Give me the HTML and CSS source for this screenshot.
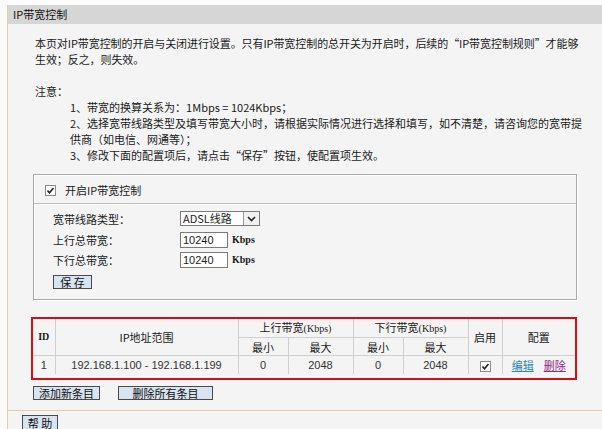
FILE: index.html
```html
<!DOCTYPE html>
<html lang="zh-CN">
<head>
<meta charset="utf-8">
<title>IP带宽控制</title>
<link rel="stylesheet" href="styles.css">
</head>
<body>
<div class="frame">
  <div class="titlebar">IP带宽控制</div>
  <div class="content">
    <p class="intro">本页对IP带宽控制的开启与关闭进行设置。只有IP带宽控制的总开关为开启时，后续的“IP带宽控制规则”才能够<br>生效；反之，则失效。</p>
    <p class="note-h">注意：</p>
    <div class="notes">
      <p>1、带宽的换算关系为：1Mbps = 1024Kbps；</p>
      <p>2、选择宽带线路类型及填写带宽大小时，请根据实际情况进行选择和填写，如不清楚，请咨询您的宽带提<br>供商（如电信、网通等）；</p>
      <p>3、修改下面的配置项后，请点击“保存”按钮，使配置项生效。</p>
    </div>
    <div class="box">
      <div class="box-head">
        <span class="chk"><svg width="9" height="9" viewBox="0 0 9 9"><path d="M1.5 4.5 L3.5 6.8 L7.5 2" fill="none" stroke="#222" stroke-width="1.6"/></svg></span>
        <span>开启IP带宽控制</span>
      </div>
      <div class="box-body">
        <div class="row r1">
          <span class="lbl">宽带线路类型：</span>
          <div class="select"><span class="sel-val">ADSL线路</span><span class="sel-arrow"><svg width="9" height="6" viewBox="0 0 9 6"><path d="M1 1 L4.5 4.5 L8 1" fill="none" stroke="#222" stroke-width="1.6"/></svg></span></div>
        </div>
        <div class="row r2">
          <span class="lbl">上行总带宽：</span>
          <span class="input">10240</span>
          <span class="unit">Kbps</span>
        </div>
        <div class="row r3">
          <span class="lbl">下行总带宽：</span>
          <span class="input">10240</span>
          <span class="unit">Kbps</span>
        </div>
        <button class="btn save">保 存</button>
      </div>
    </div>
    <div class="tblwrap">
      <table class="rules">
        <colgroup>
          <col class="c-id"><col class="c-ip"><col class="c-min"><col class="c-max"><col class="c-min"><col class="c-max"><col class="c-en"><col class="c-cfg">
        </colgroup>
        <tr class="h1">
          <th rowspan="2" class="idh">ID</th>
          <th rowspan="2">IP地址范围</th>
          <th colspan="2">上行带宽<span class="kb">(Kbps)</span></th>
          <th colspan="2">下行带宽<span class="kb">(Kbps)</span></th>
          <th rowspan="2">启用</th>
          <th rowspan="2">配置</th>
        </tr>
        <tr class="h2">
          <th>最小</th><th>最大</th><th>最小</th><th>最大</th>
        </tr>
        <tr class="data">
          <td>1</td>
          <td>192.168.1.100 - 192.168.1.199</td>
          <td>0</td>
          <td>2048</td>
          <td>0</td>
          <td>2048</td>
          <td><span class="chk small"><svg width="9" height="9" viewBox="0 0 9 9"><path d="M1.5 4.5 L3.5 6.8 L7.5 2" fill="none" stroke="#222" stroke-width="1.6"/></svg></span></td>
          <td class="cfg"><a class="edit" href="#">编辑</a><a class="del" href="#">删除</a></td>
        </tr>
      </table>
    </div>
    <div class="actions">
      <button class="btn add">添加新条目</button>
      <button class="btn delall">删除所有条目</button>
    </div>
  </div>
  <div class="footer">
    <button class="btn help">帮 助</button>
  </div>
</div>
</body>
</html>
```

FILE: styles.css
```css
html, body {
  margin: 0;
  padding: 0;
  background: #fbfbfb;
}
body {
  font-family: "Noto Sans CJK SC", "Noto Sans", sans-serif;
  font-size: 11px;
  color: #1a1a1a;
  line-height: 16px;
  width: 602px;
  height: 429px;
  overflow: hidden;
}
.frame {
  margin-top: 5px;
  margin-left: 7px;
  border-left: 1px solid #e2cfae;
  background: #f4f4f4;
}
.titlebar {
  height: 19px;
  line-height: 19px;
  background: #d6d6d6;
  padding-left: 5px;
  font-size: 11px;
  color: #111;
}
.content {
  padding: 11px 25px 10px 25px;
  border-bottom: 1px solid #e2cfae;
}
.content p {
  margin: 0;
  white-space: nowrap;
}
.intro {
  padding-left: 2px;
  letter-spacing: -0.08px;
}
.note-h {
  margin-top: 16px !important;
  padding-left: 2px;
}
.notes {
  padding-left: 37px;
}
.box {
  margin-top: 11px;
  border: 1px solid #a9a9a9;
  box-shadow: 1px 1px 0 #fff, inset 1px 1px 0 #fff;
}
.box-head {
  height: 29px;
  display: flex;
  align-items: center;
  padding: 2px 0 0 11px;
  box-sizing: border-box;
  border-bottom: 1px solid #bdbdbd;
  box-shadow: 0 1px 0 #fff;
}
.chk {
  width: 11px;
  height: 11px;
  box-sizing: border-box;
  border: 1px solid #8a8a8a;
  background: #fff;
  display: inline-flex;
  align-items: center;
  justify-content: center;
  margin-right: 9px;
}
.chk.small {
  margin: 0;
  vertical-align: middle;
}
.box-body {
  padding: 7px 0 10px 19px;
}
.row {
  display: flex;
  align-items: center;
}
.lbl {
  width: 127px;
}
.r1 {
  height: 15px;
  margin-bottom: 6px;
}
.r2, .r3 {
  height: 16px;
}
.r2 {
  margin-bottom: 4px;
}
.select {
  width: 80px;
  height: 15px;
  box-sizing: border-box;
  border: 1px solid #7a7a7a;
  background: #fff;
  display: flex;
  align-items: center;
  font-size: 11px;
}
.sel-val {
  flex: 1;
  padding-left: 2px;
  line-height: 13px;
}
.sel-arrow {
  width: 16px;
  height: 13px;
  box-sizing: border-box;
  border-left: 1px solid #9a9a9a;
  background: #f0f0f0;
  display: flex;
  align-items: center;
  justify-content: center;
}
.input {
  width: 48px;
  height: 16px;
  box-sizing: border-box;
  border: 1px solid #7a7a7a;
  background: #fff;
  padding-left: 2px;
  line-height: 14px;
  font-family: "Liberation Sans", sans-serif;
  font-size: 11px;
}
.unit {
  margin-left: 4px;
  font-family: "Liberation Serif", serif;
  font-weight: bold;
  font-size: 10px;
}
.btn {
  font-family: "Noto Sans CJK SC", sans-serif;
  font-size: 11px;
  line-height: 12px;
  height: 14px;
  padding: 0;
  margin: 0;
  background: #d9e4f1;
  border: 1px solid #4a4a4a;
  color: #111;
  display: block;
}
.save {
  width: 39px;
  margin-top: 7px;
}
.tblwrap {
  margin-top: 17px;
  margin-left: -2px;
  width: 546px;
  box-sizing: border-box;
  border: 2px solid #d20f16;
  padding-bottom: 4px;
}
.rules {
  border-collapse: collapse;
  width: 542px;
  table-layout: fixed;
  background: #f4f4f4;
}
.c-id { width: 22px; }
.c-ip { width: 183px; }
.c-min { width: 50px; }
.c-max { width: 65px; }
.c-en { width: 34px; }
.c-cfg { width: 73px; }
.rules th, .rules td {
  border: 1px solid #cfcfcf;
  font-weight: normal;
  text-align: center;
  padding: 0;
  font-size: 11px;
  line-height: 14px;
}
.rules tr:first-child th {
  border-top: none;
}
.rules th:first-child, .rules td:first-child {
  border-left: none;
}
.rules tr > :last-child {
  border-right: none;
}
.rules tr.data td {
  border-bottom: none;
}
.h1 th { height: 18px; }
.h2 th { height: 17px; }
.data td { height: 18px; }
.idh {
  font-family: "Liberation Serif", serif;
  font-weight: bold !important;
  font-size: 10px !important;
}
.kb {
  font-family: "Liberation Serif", serif;
  font-size: 10px;
}
.data td {
  font-family: "Liberation Sans", sans-serif;
  font-size: 11px;
  color: #333;
}
.cfg a {
  font-family: "Noto Sans CJK SC", sans-serif;
  text-decoration: underline;
  margin: 0 5px;
}
.edit { color: #2c84b8; }
.del { color: #8d2b86; }
.actions {
  margin-top: 6px;
  display: flex;
  gap: 18px;
}
.add { width: 67px; }
.delall { width: 95px; }
.footer {
  padding: 4px 0 0 14px;
  height: 30px;
}
.help {
  width: 36px;
  height: 15px;
}
```
